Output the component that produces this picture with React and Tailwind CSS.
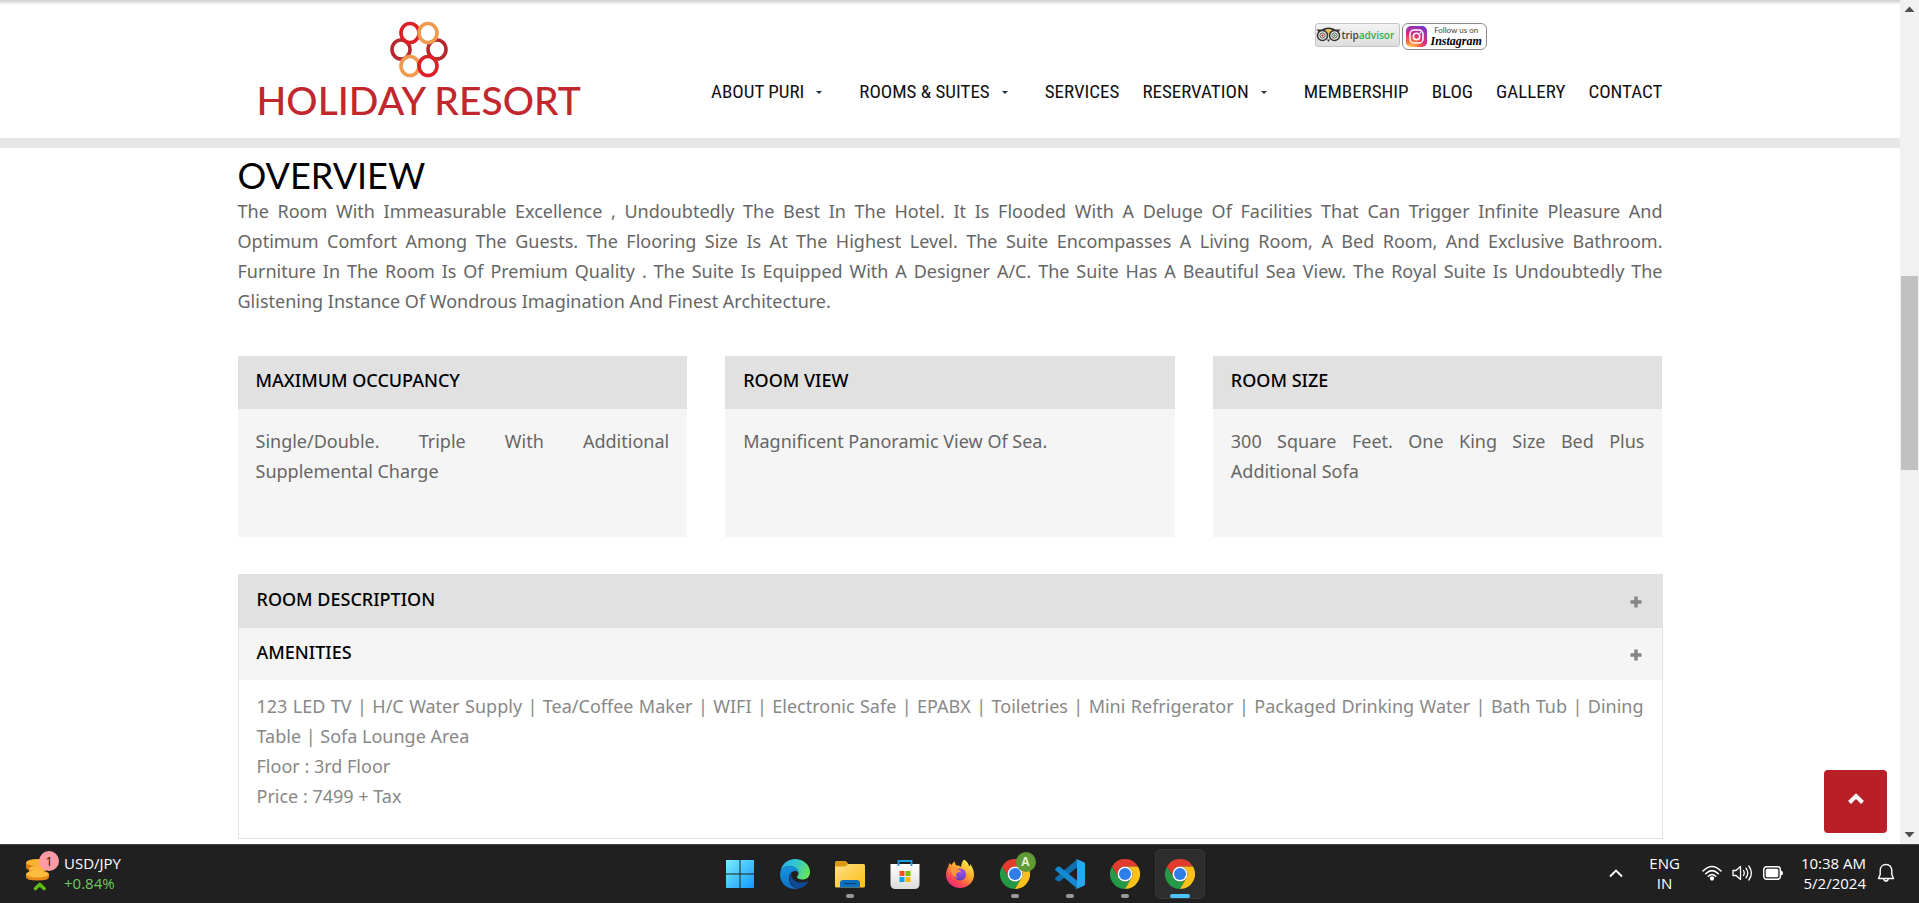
import React, { useState } from "react";

const NAV = [
  { label: "ABOUT PURI", menu: true },
  { label: "ROOMS & SUITES", menu: true },
  { label: "SERVICES" },
  { label: "RESERVATION", menu: true },
  { label: "MEMBERSHIP" },
  { label: "BLOG" },
  { label: "GALLERY" },
  { label: "CONTACT" },
];

const CARDS = [
  { title: "MAXIMUM OCCUPANCY", text: "Single/Double. Triple With Additional Supplemental Charge" },
  { title: "ROOM VIEW", text: "Magnificent Panoramic View Of Sea." },
  { title: "ROOM SIZE", text: "300 Square Feet. One King Size Bed Plus Additional Sofa" },
];

function Logo() {
  return (
    <a href="#home" className="flex flex-col items-center pt-[21px] pl-[19px] text-[#c1272d]">
      <svg width="58" height="58" viewBox="0 0 58 58" fill="none" strokeWidth="3.6" aria-hidden="true">
        <ellipse cx="11" cy="28.500" rx="9" ry="9.500" stroke="#b5292e" />
        <ellipse cx="47" cy="28.500" rx="9" ry="9.500" stroke="#b5292e" />
        <ellipse cx="20" cy="12" rx="9" ry="9.500" stroke="#dc2027" />
        <ellipse cx="38" cy="12" rx="9" ry="9.500" stroke="#ef9a4f" />
        <ellipse cx="20" cy="45" rx="9" ry="9.500" stroke="#ef9a4f" />
        <ellipse cx="38" cy="45" rx="9" ry="9.500" stroke="#dc2027" />
      </svg>
      <span className="font-[Lato,sans-serif] text-[39px] leading-[42px] font-medium whitespace-nowrap">HOLIDAY RESORT</span>
    </a>
  );
}

function TripAdvisor() {
  return (
    <a href="#tripadvisor" className="flex h-6 w-[85px] items-center gap-px rounded-[3px] border border-[#c4c4c4] bg-linear-to-b from-[#f3f3f3] to-[#dedede]">
      <svg width="25" height="16" viewBox="0 0 24 16" className="shrink-0" aria-hidden="true">
        <path d="M0 2.500h5Q12 -1.500 19 2.500h5l-2.500 3H2.500z" fill="#333" />
        <path d="M8 3.200Q12 1 16 3.200L12 8z" fill="#e9c35a" />
        <circle cx="6" cy="8.500" r="5" fill="#eee" stroke="#333" strokeWidth="1.500" />
        <circle cx="18" cy="8.500" r="5" fill="#eee" stroke="#333" strokeWidth="1.500" />
        <circle cx="6" cy="8.500" r="2.600" fill="#fff" stroke="#555" />
        <circle cx="18" cy="8.500" r="2.600" fill="#fff" stroke="#555" />
        <circle cx="6" cy="8.500" r="1.200" fill="#d0402b" />
        <circle cx="18" cy="8.500" r="1.200" fill="#2c9b48" />
        <path d="M10.500 12.500h3L12 15z" fill="#333" />
      </svg>
      <span className="font-['Open_Sans',sans-serif] text-[10px] leading-4 font-semibold text-[#444]">
        trip<span className="text-[#37ad4b]">advisor</span>
      </span>
    </a>
  );
}

function Instagram() {
  return (
    <a href="#instagram" className="flex h-[27px] w-[85px] items-center gap-1 rounded-md border border-[#8a8a8a] bg-white pl-[3px]">
      <svg width="21" height="21" viewBox="0 0 21 21" aria-hidden="true">
        <defs>
          <radialGradient id="ig" cx="0.250" cy="1.050" r="1.150">
            <stop offset="0" stopColor="#ffd65a" />
            <stop offset="0.300" stopColor="#f9703a" />
            <stop offset="0.600" stopColor="#d82c82" />
            <stop offset="1" stopColor="#7a35c8" />
          </radialGradient>
        </defs>
        <rect width="21" height="21" rx="5" fill="url(#ig)" />
        <rect x="4" y="4" width="13" height="13" rx="4" fill="none" stroke="#fff" strokeWidth="1.500" />
        <circle cx="10.500" cy="10.500" r="3.200" fill="none" stroke="#fff" strokeWidth="1.500" />
        <circle cx="14.500" cy="6.500" r="0.900" fill="#fff" />
      </svg>
      <span className="flex flex-col items-center text-black">
        <span className="font-[Lato,sans-serif] text-[8px] leading-[9px] text-[#444]">Follow us on</span>
        <span className="font-['Liberation_Serif',serif] text-[12px] leading-[13px] font-bold italic">Instagram</span>
      </span>
    </a>
  );
}

function Header() {
  return (
    <header className="h-[148px] border-b-[10px] border-[#e7e7e7] bg-white">
      <div className="h-[5px] bg-linear-to-b from-[#cfcfcf] to-white" />
      <div className="mx-auto -mt-[5px] flex w-[75%] justify-between">
        <Logo />
        <div className="flex flex-col items-end">
          <div className="flex h-[77px] items-start gap-0.5 pt-[23px] pr-44">
            <TripAdvisor />
            <Instagram />
          </div>
          <nav className="flex gap-[23px] font-['Roboto_Condensed',sans-serif] text-[19px] leading-[30px] whitespace-nowrap text-[#111]">
            {NAV.map((n) => (
              <a key={n.label} href={"#" + n.label.toLowerCase().replace(/\W+/g, "-")} className="flex items-center gap-3">
                {n.label}
                {n.menu && (
                  <svg width="20" height="3" viewBox="0 0 20 3" aria-hidden="true">
                    <path d="M0 0h6L3 3z" fill="#222f3d" />
                  </svg>
                )}
              </a>
            ))}
          </nav>
        </div>
      </div>
    </header>
  );
}

function Plus() {
  return (
    <svg width="12" height="12" viewBox="0 0 12 12" className="mt-1.5" aria-hidden="true">
      <path d="M4.300 0.500h3.400v3.800h3.800v3.400H7.700v3.800H4.300V7.700H0.500V4.300h3.800z" fill="#858585" />
    </svg>
  );
}

function Accordion() {
  const [description, setDescription] = useState(false);
  const [amenities, setAmenities] = useState(true);
  return (
    <section className="border border-[#e1e1e1]">
      <h3>
        <button
          type="button"
          aria-expanded={description}
          onClick={() => setDescription(!description)}
          className="flex h-[53px] w-full items-center justify-between bg-[#e1e1e1] pr-5 pb-1.5 pl-[18px] text-[18px] leading-[30px] font-medium text-black"
        >
          ROOM DESCRIPTION
          <Plus />
        </button>
      </h3>
      <h3>
        <button
          type="button"
          aria-expanded={amenities}
          onClick={() => setAmenities(!amenities)}
          className="flex h-[52px] w-full items-center justify-between bg-[#f5f5f5] pr-5 pb-1 pl-[18px] text-[18px] leading-[30px] font-medium text-black"
        >
          AMENITIES
          <Plus />
        </button>
      </h3>
      {amenities && (
        <div className="px-[18px] pt-[11px] pb-[27px] text-[18px] leading-[30px] text-[#888]">
          <p className="text-justify">
            123 LED TV | H/C Water Supply | Tea/Coffee Maker | WIFI | Electronic Safe | EPABX | Toiletries | Mini
            Refrigerator | Packaged Drinking Water | Bath Tub | Dining Table | Sofa Lounge Area
          </p>
          <p>Floor : 3rd Floor</p>
          <p>Price : 7499 + Tax</p>
        </div>
      )}
    </section>
  );
}

function ScrollBar() {
  return (
    <div className="flex w-[19px] shrink-0 flex-col items-center bg-[#f1f1f1]" aria-hidden="true">
      <svg width="19" height="19" viewBox="0 0 19 19"><path d="M4.500 12h10l-5-5.500z" fill="#505050" /></svg>
      <div className="grow-257" />
      <div className="h-[194px] w-[17px] bg-[#c1c1c1]" />
      <div className="grow-355" />
      <svg width="19" height="19" viewBox="0 0 19 19"><path d="M4.500 7h10l-5 5.500z" fill="#505050" /></svg>
    </div>
  );
}

function Page() {
  return (
    <div className="relative grow bg-white">
      <Header />
      <main className="mx-auto w-[75%] font-['Noto_Sans',sans-serif] text-[#666]">
        <h2 className="pt-[7px] font-[Lato,sans-serif] text-[36px] leading-[41px] text-black">OVERVIEW</h2>
        <p className="text-justify text-[18px] leading-[30px]">
          The Room With Immeasurable Excellence , Undoubtedly The Best In The Hotel. It Is Flooded With A Deluge Of
          Facilities That Can Trigger Infinite Pleasure And Optimum&nbsp;Comfort Among The Guests. The Flooring Size Is At The
          Highest Level. The Suite Encompasses A Living Room, A Bed Room, And Exclusive Bathroom. Furniture&nbsp;In&nbsp;The Room
          Is Of Premium Quality . The Suite Is Equipped With A Designer A/C. The Suite Has A Beautiful Sea View. The
          Royal Suite Is Undoubtedly The Glistening&nbsp;Instance Of Wondrous Imagination And Finest Architecture.
        </p>
        <div className="grid grid-cols-3 gap-[38px] pt-10 pb-[37px]">
          {CARDS.map((c) => (
            <section key={c.title} className="bg-[#f5f5f5]">
              <h3 className="h-[53px] bg-[#e1e1e1] px-[18px] pt-[9px] text-[18px] leading-[30px] font-medium text-black">
                {c.title}
              </h3>
              <p className="min-h-32 px-[18px] pt-[17px] text-justify text-[18px] leading-[30px]">{c.text}</p>
            </section>
          ))}
        </div>
        <Accordion />
      </main>
      <button
        type="button"
        aria-label="Back to top"
        className="absolute right-[13px] bottom-[11px] flex size-[63px] items-center justify-center rounded bg-[#b81f26]"
      >
        <svg width="18" height="12" viewBox="0 0 18 12" className="mb-1.5" aria-hidden="true">
          <path d="M2.500 9.500L9 3l6.500 6.500" fill="none" stroke="#fff" strokeWidth="4" />
        </svg>
      </button>
    </div>
  );
}

function Chrome() {
  return (
    <svg width="30" height="30" viewBox="0 0 48 48" aria-hidden="true">
      <path d="M24 12h20.800A24 24 0 0 0 3.200 12l10.400 18A12 12 0 0 1 24 12z" fill="#e33b2e" />
      <path d="M3.200 12l10.400 18a12 12 0 0 0 20.800 0L24 48A24 24 0 0 1 3.200 12z" fill="#249a46" />
      <path d="M44.800 12A24 24 0 0 1 24 48l10.400-18A12 12 0 0 0 24 12z" fill="#fcc21b" />
      <circle cx="24" cy="24" r="12" fill="#fff" />
      <circle cx="24" cy="24" r="9.600" fill="#2f7de9" />
    </svg>
  );
}

function ChromeProfile() {
  return (
    <span className="relative">
      <Chrome />
      <span className="absolute -top-[7px] left-4 flex size-5 items-center justify-center rounded-full bg-[#5f9a36] font-['Open_Sans',sans-serif] text-[12px] leading-4 font-bold text-[#e4efd9]">
        A
      </span>
    </span>
  );
}

function Windows() {
  return (
    <svg width="30" height="30" viewBox="0 0 30 30" aria-hidden="true">
      <defs>
        <linearGradient id="win" x1="0" y1="0" x2="30" y2="30" gradientUnits="userSpaceOnUse">
          <stop offset="0" stopColor="#7df0ff" />
          <stop offset="1" stopColor="#0f96fb" />
        </linearGradient>
      </defs>
      <path d="M1 1h13.500v13.500H1zM15.500 1H29v13.500H15.500zM1 15.500h13.500V29H1zM15.500 15.500H29V29H15.500z" fill="url(#win)" />
    </svg>
  );
}

function Edge() {
  return (
    <svg width="30" height="30" viewBox="0 0 30 30" aria-hidden="true">
      <defs>
        <linearGradient id="edgeTop" x1="2" y1="6" x2="29" y2="16" gradientUnits="userSpaceOnUse">
          <stop offset="0" stopColor="#2bb4f0" />
          <stop offset="0.500" stopColor="#35c9c4" />
          <stop offset="1" stopColor="#6be84f" />
        </linearGradient>
        <linearGradient id="edgeLeft" x1="4" y1="8" x2="12" y2="30" gradientUnits="userSpaceOnUse">
          <stop offset="0" stopColor="#1696e0" />
          <stop offset="1" stopColor="#0b6cc4" />
        </linearGradient>
      </defs>
      <path d="M0.300 13C1.500 5 8 0 15 0c8.500 0 15 6 15 13 0 5-3.500 7.500-7.500 7.500-3.500 0-5.500-1.200-5.500-2.500 0-1 1.500-1.500 1.500-4C18.500 10 14 7 9.500 7 5 7 1.500 9.500 0.300 13z" fill="url(#edgeTop)" />
      <path d="M0.100 15C0.500 10.500 4.500 7 9.500 7c4.500 0 9 2.800 9 7-1-1.500-2.300-2-3.500-2-4 0-6 4-6 7.500C9 25 13 29 18 29.700 8 31.500-0.500 24 0.100 15z" fill="url(#edgeLeft)" />
      <path d="M11.800 13.200c-4 2.500-3.500 13.500 6.200 16.500 4-0.500 7.800-3 9.800-6.500 0.300-0.800-0.300-1.200-1-0.800C20 25.500 12 22 11.500 17c-0.100-1.300-0.200-2.600 0.300-3.800z" fill="#0d4a94" />
    </svg>
  );
}

function Explorer() {
  return (
    <svg width="30" height="30" viewBox="0 0 30 30" aria-hidden="true">
      <defs>
        <linearGradient id="fold" x1="0" y1="4" x2="20" y2="28" gradientUnits="userSpaceOnUse">
          <stop offset="0" stopColor="#ffe08a" />
          <stop offset="1" stopColor="#fdc428" />
        </linearGradient>
      </defs>
      <path d="M0 3.500Q0 2 1.500 2h8.500q1 0 1.600 0.800L13.500 5v5H0z" fill="#dc9a12" />
      <path d="M0 7.500h10.500l2.500-2.500h15.500Q30 5 30 6.500V27q0 1.500-1.500 1.500h-27Q0 28.500 0 27z" fill="url(#fold)" />
      <path d="M5 28.500V24q0-3 3-3h14q3 0 3 3v4.500z" fill="#0f71bd" />
      <path d="M8.500 24.500h13" stroke="#08457c" strokeWidth="1.200" />
    </svg>
  );
}

function Store() {
  return (
    <svg width="30" height="30" viewBox="0 0 30 30" aria-hidden="true">
      <defs>
        <linearGradient id="bag" x1="0" y1="5" x2="0" y2="30" gradientUnits="userSpaceOnUse">
          <stop offset="0" stopColor="#fff" />
          <stop offset="1" stopColor="#dcdcdc" />
        </linearGradient>
      </defs>
      <path d="M0.500 5h29v20q0 5-5 5h-19q-5 0-5-5z" fill="url(#bag)" />
      <path d="M8.500 7V2h13v5" fill="none" stroke="#1a9be6" strokeWidth="1.800" />
      <path d="M9.500 12h5v5h-5z" fill="#f25022" />
      <path d="M15.500 12h5v5h-5z" fill="#7fba00" />
      <path d="M9.500 18h5v5h-5z" fill="#00a4ef" />
      <path d="M15.500 18h5v5h-5z" fill="#ffb900" />
    </svg>
  );
}

function Firefox() {
  return (
    <svg width="30" height="30" viewBox="0 0 30 30" aria-hidden="true">
      <defs>
        <linearGradient id="fox" x1="24" y1="3" x2="6" y2="28" gradientUnits="userSpaceOnUse">
          <stop offset="0" stopColor="#fff04a" />
          <stop offset="0.400" stopColor="#ffa02c" />
          <stop offset="0.750" stopColor="#ff4650" />
          <stop offset="1" stopColor="#e5228a" />
        </linearGradient>
        <radialGradient id="globe" cx="0.600" cy="0.300" r="0.800">
          <stop offset="0" stopColor="#a453f0" />
          <stop offset="1" stopColor="#5537b8" />
        </radialGradient>
      </defs>
      <path d="M19 0.500c3 2 4.800 4.500 5.200 7 1-0.300 1-1.500 0.800-2.500 2.500 3 4 6.500 4 10.500 0 8-6.500 13.500-14 13.500S1 23.500 1 15.500c0-3 1-6 2.500-8 0-1 0.200-2.300 1-3.500 0.700 1 1.300 1.700 1.800 2C7 5 8 3.500 10 2.500c-0.300 1.500 0.500 3 1.500 4 2-0.300 3.500 0.500 4.500 1.500 0.500-3 1-5.500 3-7.500z" fill="url(#fox)" />
      <circle cx="15" cy="15.500" r="6" fill="url(#globe)" />
      <path d="M5 9c3-2 6-1.500 8 1.500 1 0.500 2.500 0.500 3 1-0.500 1.500-3 1.500-4 2.500-1.500 1.500-1 3.500 0.500 5-3-0.500-6-4-7.500-10z" fill="#ff9640" />
    </svg>
  );
}

function VSCode() {
  return (
    <svg width="30" height="30" viewBox="0 0 30 30" aria-hidden="true">
      <path d="M22 0.500V8.500L4.500 22.500 2.500 22.300 0.300 20.300Q-0.300 19.500 0.500 18.800z" fill="#0f6fb3" />
      <path d="M2.500 7.800L4.500 7.600 22 21.500v8L0.500 11.200q-0.800-0.800-0.200-1.500z" fill="#1489d1" />
      <path d="M22 0.200L29 3.300Q30 3.800 30 5v20q0 1.200-1 1.700l-7 3.100q-1 0.200-1.500-0.600 1.500 0.300 1.500-1.200V2q0-1.500-1.500-1.200Q21 0 22 0.200z" fill="#2aa7f2" />
    </svg>
  );
}

const APPS = [
  { name: "Start", Icon: Windows },
  { name: "Microsoft Edge", Icon: Edge },
  { name: "File Explorer", Icon: Explorer, open: true },
  { name: "Microsoft Store", Icon: Store },
  { name: "Firefox", Icon: Firefox },
  { name: "Chrome profile A", Icon: ChromeProfile, open: true },
  { name: "Visual Studio Code", Icon: VSCode, open: true },
  { name: "Chrome", Icon: Chrome, open: true },
  { name: "Chrome window", Icon: Chrome, active: true },
];

function Taskbar() {
  return (
    <footer className="grid h-[59px] shrink-0 grid-cols-[1fr_auto_1fr] border-t border-[#444] bg-[#202020] font-['Open_Sans',sans-serif] text-[15px] leading-5 text-white">
      <button type="button" className="flex items-center justify-self-start pb-0.5 pl-[25px] text-left">
        <span className="relative mr-[5px]">
          <svg width="34" height="40" viewBox="0 0 34 40" aria-hidden="true">
            <path d="M1 9.500v5q0 3.500 11.500 3.500V9.500z" fill="#d97a10" />
            <ellipse cx="12.500" cy="9.500" rx="11.500" ry="3.500" fill="#f9b233" />
            <path d="M4 15v4q0 3.500 11.500 3.500V15z" fill="#ef9420" />
            <ellipse cx="14" cy="15.500" rx="10" ry="3" fill="#fbb73c" />
            <path d="M1 21v3q0 3.500 11.500 3.500T24 24v-3z" fill="#e88a18" />
            <ellipse cx="12.500" cy="21" rx="11.500" ry="3.500" fill="#fcbc40" />
            <path d="M10.500 35.500l4.300-4 4.300 4" fill="none" stroke="#5ebd14" strokeWidth="3.600" strokeLinecap="round" strokeLinejoin="round" />
          </svg>
          <span className="absolute -top-0.5 left-3.5 flex size-5 items-center justify-center rounded-full bg-[#ff99a4] text-[13px] leading-5 text-[#222]">
            1
          </span>
        </span>
        <span className="flex flex-col">
          <span>USD/JPY</span>
          <span className="text-[#6ccb5f]">+0.84%</span>
        </span>
      </button>
      <div className="flex items-center gap-[5px]">
        {APPS.map(({ name, Icon, open, active }) => (
          <button
            key={name}
            type="button"
            aria-label={name}
            className={
              "flex h-[50px] w-[50px] flex-col items-center rounded-md border pt-[9px] " +
              (active ? "border-[#383838] bg-[#2d2d2d]" : "border-transparent")
            }
          >
            <Icon />
            {open && <span className="mt-[5px] h-1 w-2 shrink-0 rounded-full bg-[#9a9a9a]" />}
            {active && <span className="mt-[5px] h-1 w-5 shrink-0 rounded-full bg-[#4cc2ff]" />}
          </button>
        ))}
      </div>
      <div className="flex items-center justify-end pr-6 pb-0.5">
        <button type="button" aria-label="Show hidden icons" className="mr-[26px]">
          <svg width="14" height="9" viewBox="0 0 14 9" aria-hidden="true">
            <path d="M1 7.500l6-6 6 6" fill="none" stroke="#fff" strokeWidth="1.800" />
          </svg>
        </button>
        <button type="button" className="mr-[22px] flex flex-col items-center">
          <span>ENG</span>
          <span>IN</span>
        </button>
        <button type="button" aria-label="Network, volume and battery" className="mr-[18px] flex items-center gap-[10px]">
          <svg width="20" height="16" viewBox="0 0 20 16" fill="none" stroke="#fff" strokeWidth="1.500" strokeLinecap="round" aria-hidden="true">
            <path d="M1 6Q10 -3 19 6M3.700 8.800Q10 2.500 16.300 8.800M6.300 11.300Q10 7.800 13.700 11.300" />
            <circle cx="10" cy="13.500" r="1.400" fill="#fff" />
          </svg>
          <svg width="21" height="18" viewBox="0 0 21 18" fill="none" stroke="#fff" strokeWidth="1.300" strokeLinecap="round" strokeLinejoin="round" aria-hidden="true">
            <path d="M1 6.500h3L8.500 2.500v13L4 11.500H1zM11.500 6.500q1.500 2.500 0 5M14 4.200q3.500 4.800 0 9.600M16.800 2q5.200 7 0 14" />
          </svg>
          <svg width="20" height="14" viewBox="0 0 20 14" aria-hidden="true">
            <rect x="0.700" y="0.700" width="16.600" height="12.600" rx="3" fill="none" stroke="#fff" strokeWidth="1.400" />
            <rect x="2.700" y="2.700" width="12.600" height="8.600" rx="1.500" fill="#fff" />
            <path d="M18 4.500q2 0.500 2 2.500t-2 2.500z" fill="#fff" />
          </svg>
        </button>
        <button type="button" className="mr-[11px] flex flex-col items-end">
          <span>10:38 AM</span>
          <span>5/2/2024</span>
        </button>
        <button type="button" aria-label="Notifications">
          <svg width="18" height="20" viewBox="0 0 18 20" fill="none" stroke="#fff" strokeWidth="1.400" strokeLinejoin="round" aria-hidden="true">
            <path d="M9 1.500C5.500 1.500 3.200 4 3.200 7.500v4L1.500 15.500h15l-1.700-4v-4C14.800 4 12.500 1.500 9 1.500zM6.800 15.800q0.300 2.200 2.200 2.200t2.200-2.200" />
          </svg>
        </button>
      </div>
    </footer>
  );
}

export default function App() {
  return (
    <div className="flex min-h-screen flex-col bg-white">
      <div className="flex grow">
        <Page />
        <ScrollBar />
      </div>
      <Taskbar />
    </div>
  );
}
